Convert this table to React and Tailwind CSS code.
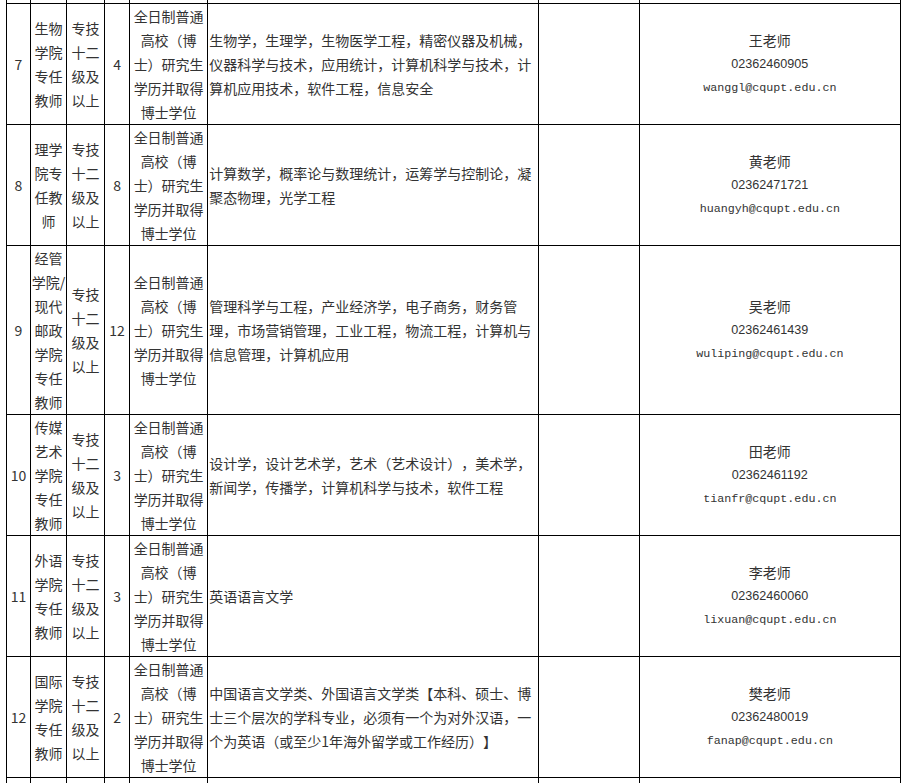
import React from "react";

const edu = "全日制普通高校（博士）研究生学历并取得博士学位";

const rows = [
  {
    no: "7",
    dept: "生物学院专任教师",
    num: "4",
    major: "生物学，生理学，生物医学工程，精密仪器及机械，仪器科学与技术，应用统计，计算机科学与技术，计算机应用技术，软件工程，信息安全",
    name: "王老师",
    phone: "02362460905",
    email: "wanggl@cqupt.edu.cn",
  },
  {
    no: "8",
    dept: "理学院专任教师",
    num: "8",
    major: "计算数学，概率论与数理统计，运筹学与控制论，凝聚态物理，光学工程",
    name: "黄老师",
    phone: "02362471721",
    email: "huangyh@cqupt.edu.cn",
  },
  {
    no: "9",
    dept: "经管学院/现代邮政学院专任教师",
    num: "12",
    major: "管理科学与工程，产业经济学，电子商务，财务管理，市场营销管理，工业工程，物流工程，计算机与信息管理，计算机应用",
    name: "吴老师",
    phone: "02362461439",
    email: "wuliping@cqupt.edu.cn",
  },
  {
    no: "10",
    dept: "传媒艺术学院专任教师",
    num: "3",
    major: "设计学，设计艺术学，艺术（艺术设计），美术学，新闻学，传播学，计算机科学与技术，软件工程",
    name: "田老师",
    phone: "02362461192",
    email: "tianfr@cqupt.edu.cn",
  },
  {
    no: "11",
    dept: "外语学院专任教师",
    num: "3",
    major: "英语语言文学",
    name: "李老师",
    phone: "02362460060",
    email: "lixuan@cqupt.edu.cn",
  },
  {
    no: "12",
    dept: "国际学院专任教师",
    num: "2",
    major: "中国语言文学类、外国语言文学类【本科、硕士、博士三个层次的学科专业，必须有一个为对外汉语，一个为英语（或至少1年海外留学或工作经历）】",
    name: "樊老师",
    phone: "02362480019",
    email: "fanap@cqupt.edu.cn",
  },
];

const cell = "border border-black p-0 align-middle";

function Spacer({ h, top }) {
  return (
    <tr className={h}>
      {Array.from({ length: 8 }).map((_, i) => (
        <td key={i} className={top ? "border border-black border-t-0 p-0" : "border border-black border-b-0 p-0"}></td>
      ))}
    </tr>
  );
}

export default function App() {
  return (
    <div className="bg-white w-[904px] h-[783px] overflow-hidden pl-[6px]">
      <table className="table-fixed border-collapse w-[895px] text-[14px] leading-[24px] text-[#333] [text-spacing-trim:space-all] font-['Noto_Sans_CJK_SC',sans-serif]">
        <colgroup>
          <col className="w-[24px]" />
          <col className="w-[36px]" />
          <col className="w-[38px]" />
          <col className="w-[25px]" />
          <col className="w-[78px]" />
          <col className="w-[330px]" />
          <col className="w-[101px]" />
          <col className="w-[261px]" />
        </colgroup>
        <tbody>
          <Spacer h="h-[3px]" top />
          {rows.map((r) => (
            <tr key={r.no}>
              <td className={cell + " text-center"}>{r.no}</td>
              <td className={cell + " text-center"}>{r.dept}</td>
              <td className={cell + " text-center"}>专技十二级及以上</td>
              <td className={cell + " text-center"}>{r.num}</td>
              <td className={cell + " text-center"}>{edu}</td>
              <td className={cell + " pl-[1px]"}>{r.major}</td>
              <td className={cell}></td>
              <td className={cell + " text-center"}>
                <div>{r.name}</div>
                <div className="font-['Liberation_Sans',sans-serif] text-[12.6px]">{r.phone}</div>
                <div className="font-['Liberation_Mono',monospace] text-[11.7px]">{r.email}</div>
              </td>
            </tr>
          ))}
          <Spacer h="h-[20px]" />
        </tbody>
      </table>
    </div>
  );
}
